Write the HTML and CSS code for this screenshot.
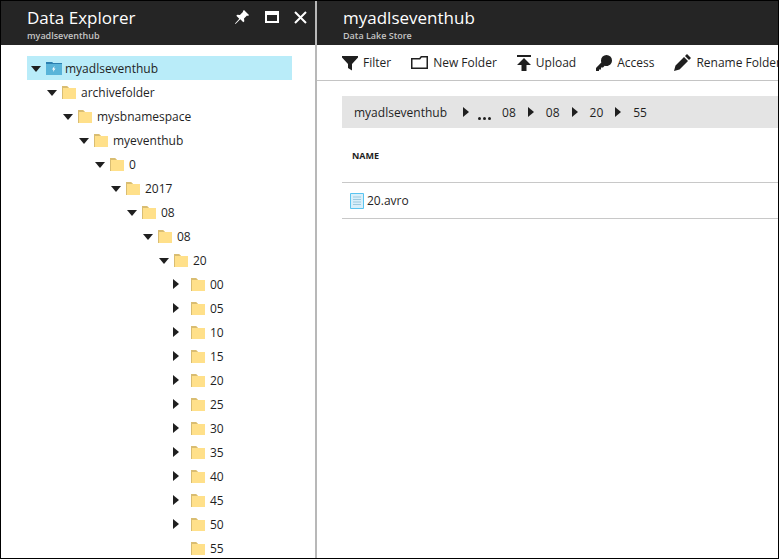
FILE: index.html
```html
<!DOCTYPE html>
<html lang="en">
<head>
    <meta charset="UTF-8">
    <title>Data Explorer</title>
    <link rel="stylesheet" href="styles.css">
</head>
<body>
    <svg class="defs" width="0" height="0">
        <symbol id="folder" viewBox="0 0 14 13">
            <path d="M0 0h5l2 2h7v11H0z" fill="#ffe08a"/>
            <path d="M0 0h5l2 2H1v11H0z" fill="#d9bd72"/>
        </symbol>
    </svg>

    <div class="window">
        <aside class="explorer">
            <header class="blade-head">
                <div>
                    <h1>Data Explorer</h1>
                    <p>myadlseventhub</p>
                </div>
                <div class="win-icons">
                    <svg width="16" height="16" viewBox="0 0 16 16"><path d="M10 1l5 5-1 1-1-.4-3 3 .3 2.6-1 1-3-3L1.500 15 1 14.500l4.300-4.800-3-3 1-1 2.600.3 3-3L9 2z" fill="#fff"/></svg>
                    <svg width="14" height="12" viewBox="0 0 14 12"><path d="M0 0h14v12H0zM2 4v6h10V4z" fill="#fff" fill-rule="evenodd"/></svg>
                    <svg width="13" height="13" viewBox="0 0 13 13"><path d="M1 1l11 11M12 1L1 12" stroke="#fff" stroke-width="2"/></svg>
                </div>
            </header>

            <ul class="tree root">
                <li>
                    <div class="row selected">
                        <span class="arrow open"></span>
                        <svg class="store-icon" width="16" height="13" viewBox="0 0 16 13"><path d="M0 0h6l1 1h9v12H0z" fill="#59b4d9"/><path d="M0 0h6l1 1h9v1H0z" fill="#2b7fb0"/><path d="M8.500 4L6 7.500h1.500L7 10l2.500-3.500H8z" fill="#fff"/></svg>
                        <span>myadlseventhub</span>
                    </div>
                    <ul class="tree"><li>
                        <div class="row"><span class="arrow open"></span><svg class="folder"><use href="#folder"/></svg><span>archivefolder</span></div>
                        <ul class="tree"><li>
                            <div class="row"><span class="arrow open"></span><svg class="folder"><use href="#folder"/></svg><span>mysbnamespace</span></div>
                            <ul class="tree"><li>
                                <div class="row"><span class="arrow open"></span><svg class="folder"><use href="#folder"/></svg><span>myeventhub</span></div>
                                <ul class="tree"><li>
                                    <div class="row"><span class="arrow open"></span><svg class="folder"><use href="#folder"/></svg><span>0</span></div>
                                    <ul class="tree"><li>
                                        <div class="row"><span class="arrow open"></span><svg class="folder"><use href="#folder"/></svg><span>2017</span></div>
                                        <ul class="tree"><li>
                                            <div class="row"><span class="arrow open"></span><svg class="folder"><use href="#folder"/></svg><span>08</span></div>
                                            <ul class="tree"><li>
                                                <div class="row"><span class="arrow open"></span><svg class="folder"><use href="#folder"/></svg><span>08</span></div>
                                                <ul class="tree"><li>
                                                    <div class="row"><span class="arrow open"></span><svg class="folder"><use href="#folder"/></svg><span>20</span></div>
                                                    <ul class="tree">
                                                        <li class="row"><span class="arrow"></span><svg class="folder"><use href="#folder"/></svg><span>00</span></li>
                                                        <li class="row"><span class="arrow"></span><svg class="folder"><use href="#folder"/></svg><span>05</span></li>
                                                        <li class="row"><span class="arrow"></span><svg class="folder"><use href="#folder"/></svg><span>10</span></li>
                                                        <li class="row"><span class="arrow"></span><svg class="folder"><use href="#folder"/></svg><span>15</span></li>
                                                        <li class="row"><span class="arrow"></span><svg class="folder"><use href="#folder"/></svg><span>20</span></li>
                                                        <li class="row"><span class="arrow"></span><svg class="folder"><use href="#folder"/></svg><span>25</span></li>
                                                        <li class="row"><span class="arrow"></span><svg class="folder"><use href="#folder"/></svg><span>30</span></li>
                                                        <li class="row"><span class="arrow"></span><svg class="folder"><use href="#folder"/></svg><span>35</span></li>
                                                        <li class="row"><span class="arrow"></span><svg class="folder"><use href="#folder"/></svg><span>40</span></li>
                                                        <li class="row"><span class="arrow"></span><svg class="folder"><use href="#folder"/></svg><span>45</span></li>
                                                        <li class="row"><span class="arrow"></span><svg class="folder"><use href="#folder"/></svg><span>50</span></li>
                                                        <li class="row"><span class="arrow none"></span><svg class="folder"><use href="#folder"/></svg><span>55</span></li>
                                                    </ul>
                                                </li></ul>
                                            </li></ul>
                                        </li></ul>
                                    </li></ul>
                                </li></ul>
                            </li></ul>
                        </li></ul>
                    </li></ul>
                </li>
            </ul>
        </aside>

        <main class="store">
            <header class="blade-head">
                <div>
                    <h1>myadlseventhub</h1>
                    <p>Data Lake Store</p>
                </div>
            </header>

            <nav class="toolbar">
                <div class="tool">
                    <svg width="16" height="16" viewBox="0 0 16 16"><path d="M0 1h16v1.500L10 9v6.500L6 13V9L0 2.500z" fill="#1f1f1f"/></svg>
                    <span>Filter</span>
                </div>
                <div class="tool">
                    <svg width="17" height="13" viewBox="0 0 17 13"><path d="M.750 2.750h8l1.500-2h6v11.500H.750z" fill="none" stroke="#1f1f1f" stroke-width="1.500"/></svg>
                    <span>New Folder</span>
                </div>
                <div class="tool">
                    <svg width="14" height="16" viewBox="0 0 14 16"><path d="M0 0h14v2H0zM7 3l7 7h-4.500v6h-5v-6H0z" fill="#1f1f1f"/></svg>
                    <span>Upload</span>
                </div>
                <div class="tool">
                    <svg width="16" height="16" viewBox="0 0 16 16"><path d="M10.500 0A5.500 5.500 0 0 1 16 5.500C16 8.500 13.500 11 10.500 11c-.8 0-1.300-.1-1.800-.3L7 12.500H5V14.500H3V16H0v-3l5.300-5.500C5.100 6.800 5 6.200 5 5.500A5.500 5.500 0 0 1 10.500 0z" fill="#1f1f1f"/></svg>
                    <span>Access</span>
                </div>
                <div class="tool">
                    <svg width="17" height="17" viewBox="0 0 17 17"><path d="M13 0l4 4-2 2-4-4zM10 3l4 4-8.500 8.500L0 17l1.500-5.500z" fill="#1f1f1f"/></svg>
                    <span>Rename Folder</span>
                </div>
            </nav>

            <div class="crumbs">
                <span class="crumb-first">myadlseventhub</span>
                <span class="arrow"></span>
                <span class="dots"><i></i><i></i><i></i></span>
                <span>08</span>
                <span class="arrow"></span>
                <span>08</span>
                <span class="arrow"></span>
                <span>20</span>
                <span class="arrow"></span>
                <span>55</span>
            </div>

            <div class="col-head">NAME</div>
            <div class="file-row">
                <svg width="14" height="16" viewBox="0 0 14 16"><path d="M.500.500h13v15H.500z" fill="#d8effa" stroke="#59c4f0"/><path d="M3 4h8M3 6.500h8M3 9h8M3 11.500h8" stroke="#9cc9de"/></svg>
                <span>20.avro</span>
            </div>
        </main>
    </div>
</body>
</html>
```

FILE: styles.css
```css
* {
    box-sizing: border-box;
}

html, body {
    margin: 0;
    padding: 0;
    height: 560px;
    overflow: hidden;
}

body {
    font-family: 'Open Sans', sans-serif;
    font-size: 12px;
    color: #1f1f1f;
    background-color: #fff;
}

.defs {
    position: absolute;
}

.window {
    display: grid;
    grid-template-columns: 314px 2px 1fr;
    height: 559px;
    border: 1px solid #000;
    overflow: hidden;
}

.explorer {
    grid-column: 1;
    overflow: hidden;
}

.store {
    grid-column: 3;
    overflow: hidden;
    position: relative;
}

.window::before {
    content: "";
    grid-column: 2;
    grid-row: 1;
    background-color: #b8b8b8;
}

.blade-head {
    display: flex;
    justify-content: space-between;
    height: 44px;
    padding: 5px 0 0 26px;
    background-color: #252525;
    color: #fff;
}

.blade-head h1 {
    margin: 0;
    font-size: 17px;
    font-weight: 400;
    line-height: 23px;
}

.blade-head p {
    margin: 1px 0 0;
    font-size: 9px;
    font-weight: 600;
    line-height: 12px;
    color: #c4c4c4;
}

.win-icons {
    display: flex;
    align-items: center;
    gap: 15px;
    height: 22px;
    padding-right: 8px;
}

.tree {
    list-style: none;
    margin: 0;
    padding: 0 0 0 16px;
}

.tree.root {
    padding: 11px 0 0 26px;
    width: 291px;
}

.row {
    display: flex;
    align-items: center;
    height: 24px;
    white-space: nowrap;
}

.selected {
    background-color: #b9ecf9;
}

.arrow {
    flex: none;
    width: 0;
    height: 0;
    border-style: solid;
    border-width: 5px 0 5px 6px;
    border-color: transparent transparent transparent #1f1f1f;
}

.row .arrow {
    margin: 0 12px 0 2px;
}

.row .arrow.open {
    border-width: 6px 5px 0;
    border-color: #1f1f1f transparent transparent;
    margin: 1px 5px 0 4px;
}

.row .arrow.none {
    visibility: hidden;
}

.folder {
    flex: none;
    width: 14px;
    height: 13px;
    margin-right: 5px;
}

.store-icon {
    flex: none;
    margin-right: 3px;
}

.toolbar {
    display: flex;
    align-items: center;
    gap: 20px;
    height: 36px;
    padding: 0 0 0 25px;
    border-bottom: 1px solid #c4c4c4;
    white-space: nowrap;
}

.tool {
    display: flex;
    align-items: center;
    gap: 5px;
}

.crumbs {
    display: flex;
    align-items: center;
    gap: 12px;
    height: 32px;
    margin: 15px 0 0 25px;
    padding-left: 12px;
    background-color: #e4e4e4;
}

.crumb-first {
    margin-right: 4px;
}

.dots {
    display: flex;
    gap: 2px;
    align-self: flex-end;
    margin: 0 -1px 8px -3px;
}

.dots i {
    width: 3px;
    height: 3px;
    border-radius: 50%;
    background-color: #1f1f1f;
}

.col-head {
    display: flex;
    align-items: center;
    height: 55px;
    margin-left: 25px;
    padding-left: 10px;
    border-bottom: 1px solid #c8c8c8;
    font-size: 9px;
    font-weight: 700;
}

.file-row {
    display: flex;
    align-items: center;
    gap: 3px;
    height: 36px;
    margin-left: 25px;
    padding-left: 8px;
    border-bottom: 1px solid #c8c8c8;
}
```
